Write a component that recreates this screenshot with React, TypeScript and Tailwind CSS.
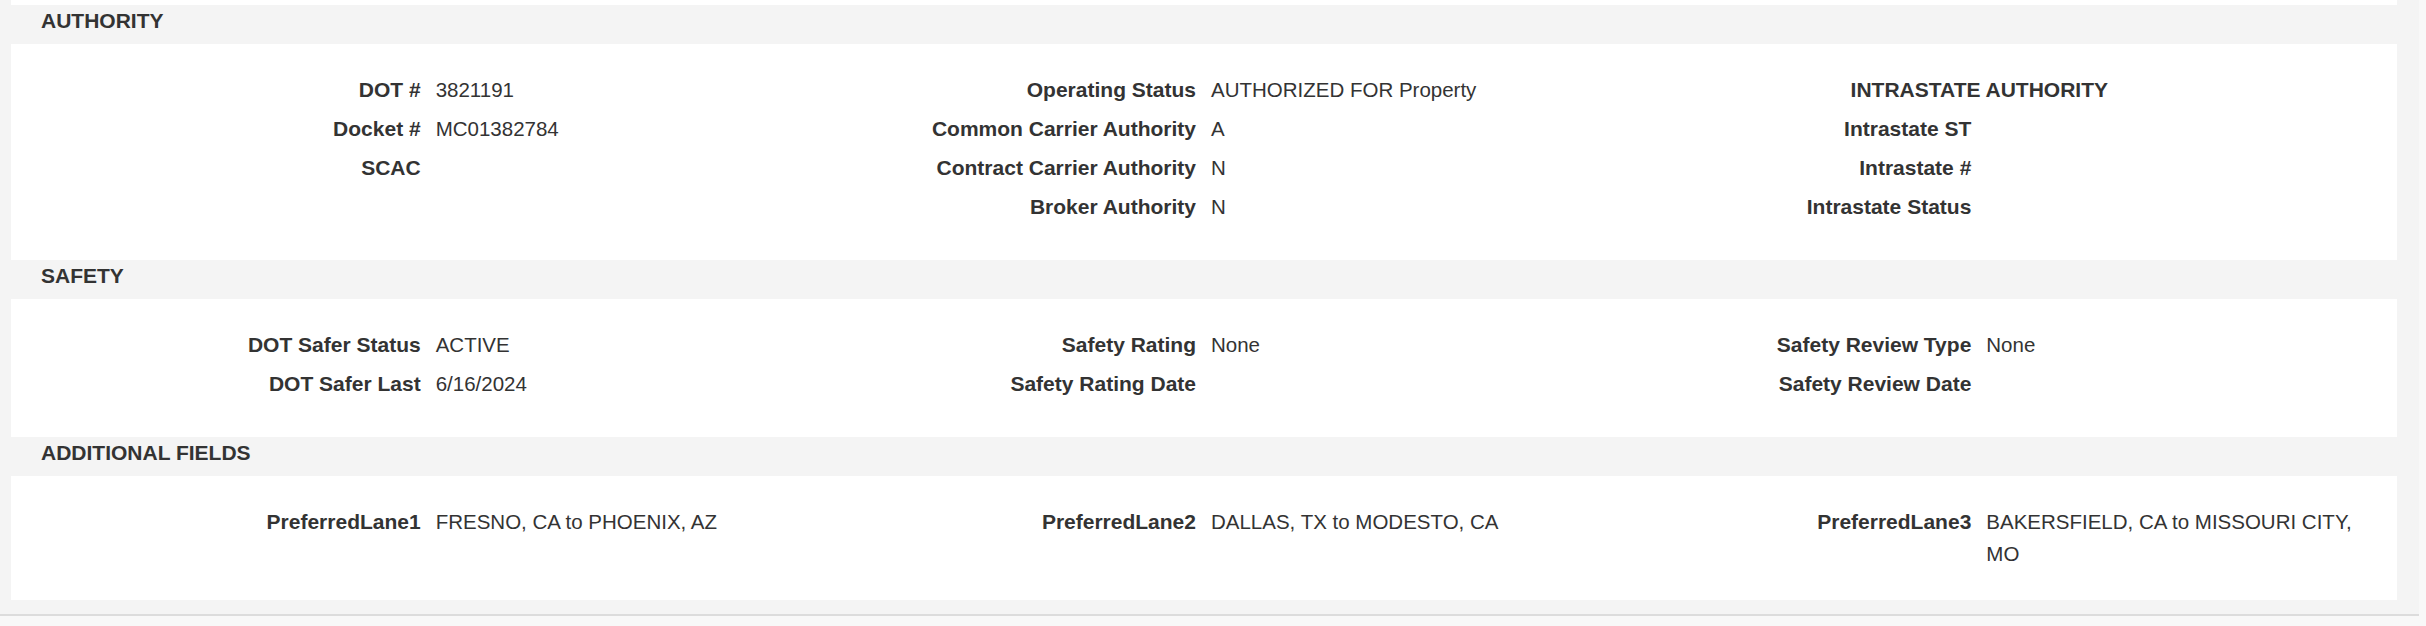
const AUTHORITY_COLS: { heading?: string; rows: { label: string; value?: string }[] }[] = [
  {
    rows: [
      { label: 'DOT #', value: '3821191' },
      { label: 'Docket #', value: 'MC01382784' },
      { label: 'SCAC' },
    ],
  },
  {
    rows: [
      { label: 'Operating Status', value: 'AUTHORIZED FOR Property' },
      { label: 'Common Carrier Authority', value: 'A' },
      { label: 'Contract Carrier Authority', value: 'N' },
      { label: 'Broker Authority', value: 'N' },
    ],
  },
  {
    heading: 'INTRASTATE AUTHORITY',
    rows: [
      { label: 'Intrastate ST' },
      { label: 'Intrastate #' },
      { label: 'Intrastate Status' },
    ],
  },
]

const SAFETY_COLS: { heading?: string; rows: { label: string; value?: string }[] }[] = [
  {
    rows: [
      { label: 'DOT Safer Status', value: 'ACTIVE' },
      { label: 'DOT Safer Last', value: '6/16/2024' },
    ],
  },
  {
    rows: [
      { label: 'Safety Rating', value: 'None' },
      { label: 'Safety Rating Date' },
    ],
  },
  {
    rows: [
      { label: 'Safety Review Type', value: 'None' },
      { label: 'Safety Review Date' },
    ],
  },
]

const ADDITIONAL_COLS: { heading?: string; rows: { label: string; value?: string }[] }[] = [
  { rows: [{ label: 'PreferredLane1', value: 'FRESNO, CA to PHOENIX, AZ' }] },
  { rows: [{ label: 'PreferredLane2', value: 'DALLAS, TX to MODESTO, CA' }] },
  { rows: [{ label: 'PreferredLane3', value: 'BAKERSFIELD, CA to MISSOURI CITY, MO' }] },
]

function SectionHeader({ title }: { title: string }) {
  return (
    <div className="min-h-[39px] pl-[30px] text-[21px] leading-[32px] font-bold text-[#333]">
      {title}
    </div>
  )
}

function Panel({ cols }: { cols: { heading?: string; rows: { label: string; value?: string }[] }[] }) {
  return (
    <div className="grid grid-cols-3 bg-white px-[30px] py-[30px]">
      {cols.map((col, i) => (
        <div key={i} className="flex flex-col">
          {col.heading && (
            <div className="min-h-[39px] text-center text-[21px] leading-[32px] font-bold text-[#333]">
              {col.heading}
            </div>
          )}
          {col.rows.map((r) => (
            <div key={r.label} className="grid grid-cols-2 min-h-[39px] leading-[32px] text-[#333]">
              <div className="pr-[8px] text-right text-[21px] font-bold">{r.label}</div>
              <div className="pl-[7px] text-[20.5px]">{r.value ?? ''}</div>
            </div>
          ))}
        </div>
      ))}
    </div>
  )
}

export default function App() {
  return (
    <div className="flex h-[626px] w-full bg-[#f8f8f8] font-['Liberation_Sans',Arial,sans-serif]">
      <div className="flex-1 self-start">
        <div className="border-b-2 border-[#dcdcdc] bg-[#f4f4f4] pl-[11px] pr-[22px] pb-[14px]">
          <div className="h-[5px] bg-white" />
          <SectionHeader title="AUTHORITY" />
          <Panel cols={AUTHORITY_COLS} />
          <SectionHeader title="SAFETY" />
          <Panel cols={SAFETY_COLS} />
          <SectionHeader title="ADDITIONAL FIELDS" />
          <Panel cols={ADDITIONAL_COLS} />
        </div>
      </div>
      <div className="w-[7px] bg-[#f8f8f8]" />
    </div>
  )
}
